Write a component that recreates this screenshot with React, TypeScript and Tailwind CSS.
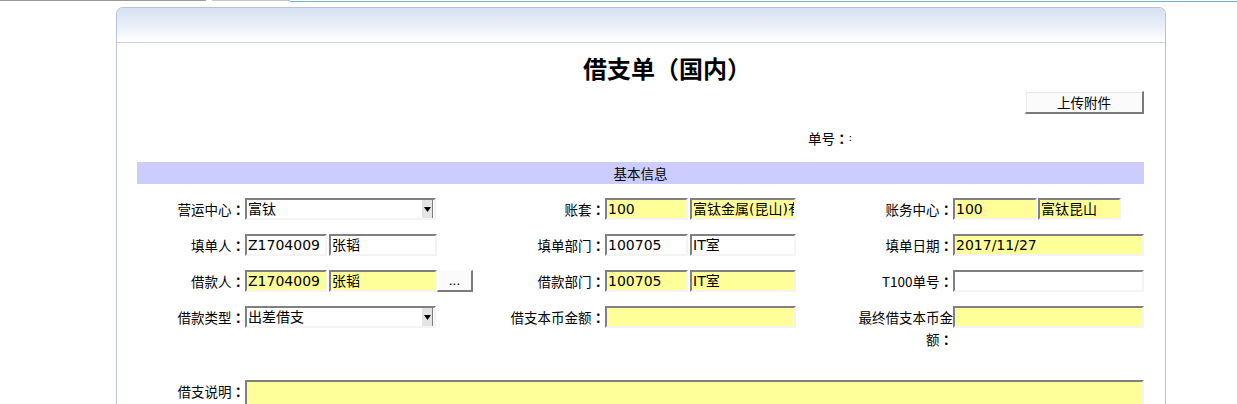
import React from "react";

const labelFont = { fontFamily: '"Noto Sans CJK SC", "DejaVu Sans", sans-serif' };

function Field({ w, value = "", yellow = false }: { w: string; value?: string; yellow?: boolean }) {
  return (
    <div
      className={`${w} h-[22px] shrink-0 border-t-2 border-l-2 border-b-2 border-r-2 border-t-[#808080] border-l-[#808080] border-b-[#f4f4f4] border-r-[#f4f4f4] ${
        yellow ? "bg-[#ffff99]" : "bg-white"
      } pl-[1px] text-[14px] leading-[18px] text-black whitespace-nowrap overflow-hidden font-['DejaVu_Sans','Noto_Sans_CJK_SC',sans-serif]`}
    >
      {value}
    </div>
  );
}

function Select({ value }: { value: string }) {
  return (
    <div className="w-[191px] h-[22px] shrink-0 flex border-t-2 border-l-2 border-b-2 border-r-2 border-t-[#808080] border-l-[#808080] border-b-[#f4f4f4] border-r-[#f4f4f4] bg-white">
      <div className="flex-1 pl-[1px] text-[14px] leading-[18px] text-black whitespace-nowrap overflow-hidden font-['DejaVu_Sans','Noto_Sans_CJK_SC',sans-serif]">
        {value}
      </div>
      <div className="w-[11px] h-[18px] bg-[#e4e4e4] border-r border-[#808080] flex items-center justify-center mr-[1px]">
        <svg width="7" height="5" viewBox="0 0 7 5">
          <polygon points="0,0 7,0 3.5,5" fill="#000" />
        </svg>
      </div>
    </div>
  );
}

function Colon() {
  return (
    <span
      className="inline-block w-[13.5px] text-center font-bold"
      style={{ fontFamily: '"Noto Sans CJK TC", "Noto Sans CJK JP", sans-serif' }}
    >
      ：
    </span>
  );
}

function Label({ text }: { text: string }) {
  return (
    <div className="text-right text-[13.5px] leading-[22px] text-black" style={labelFont}>
      {text}
      <Colon />
    </div>
  );
}

export default function App() {
  return (
    <div className="w-[1237px] h-[404px] overflow-hidden bg-white">
      {/* top strip */}
      <div className="flex h-[1px]">
        <div className="w-[206px] bg-[#9a9a9a]" />
        <div className="w-[6px] bg-white" />
        <div className="w-[78px] bg-[#c4c4c4]" />
      </div>
      <div className="flex h-[1px]">
        <div className="w-[290px]" />
        <div className="flex-1 bg-[#7ab0cf]" />
      </div>

      {/* panel */}
      <div className="mt-[5px] ml-[116px] w-[1050px] h-[400px] border border-b-0 border-[#b8c2d4] rounded-t-[7px] overflow-hidden">
        <div className="h-[35px] bg-gradient-to-b from-[#d6e0f1] via-[#e9eff8] to-white border-b border-[#c6d4ec]" />
        <div className="pl-[20px] pr-[21px]" style={labelFont}>
          <div className="pl-[53px] text-center text-[24px] leading-[30px] h-[30px] font-bold text-black mt-[10px]">
            借支单（国内）
          </div>
          <div className="flex justify-end mt-[8px]">
            <div className="w-[119px] h-[23px] border-t border-l border-t-[#ffffff] border-l-[#ffffff] border-b-2 border-r-2 border-b-[#7a7a7a] border-r-[#7a7a7a] bg-[#fbfbfb] shadow-[inset_1px_1px_0_#e8e8e8] flex items-center justify-center text-[13.5px] text-black">
              上传附件
            </div>
          </div>
          <div className="mt-[15px] ml-[671px] h-[18px] flex items-center text-[13.5px] text-black">
            单号
            <Colon />
            <span className="font-['DejaVu_Sans'] text-[11px]">:</span>
          </div>
          <div className="mt-[15px] h-[22px] bg-[#ccccff] flex items-center justify-center text-[13.5px] text-black">
            基本信息
          </div>

          <div className="mt-[14px] grid grid-cols-[108px_255px_105px_247px_101px_191px] gap-y-[14px] items-start">
            <Label text="营运中心" />
            <div className="flex">
              <Select value="富钛" />
            </div>
            <Label text="账套" />
            <div className="flex gap-[2px]">
              <Field w="w-[83px]" value="100" yellow />
              <Field w="w-[106px]" value="富钛金属(昆山)有限公司" yellow />
            </div>
            <Label text="账务中心" />
            <div className="flex gap-[1px]">
              <Field w="w-[84px]" value="100" yellow />
              <Field w="w-[83px]" value="富钛昆山" yellow />
            </div>

            <Label text="填单人" />
            <div className="flex gap-[2px]">
              <Field w="w-[82px]" value="Z1704009" />
              <Field w="w-[108px]" value="张韬" />
            </div>
            <Label text="填单部门" />
            <div className="flex gap-[2px]">
              <Field w="w-[83px]" value="100705" />
              <Field w="w-[106px]" value="IT室" />
            </div>
            <Label text="填单日期" />
            <div className="flex">
              <Field w="w-[191px]" value="2017/11/27" yellow />
            </div>

            <Label text="借款人" />
            <div className="flex">
              <Field w="w-[82px]" value="Z1704009" yellow />
              <div className="w-[2px]" />
              <Field w="w-[108px]" value="张韬" yellow />
              <div className="w-[36px] h-[22px] border-t border-l border-t-white border-l-white border-b-2 border-r-2 border-b-[#7a7a7a] border-r-[#7a7a7a] bg-[#fbfbfb] flex items-center justify-center text-[12px] text-black font-['DejaVu_Sans']">
                ...
              </div>
            </div>
            <Label text="借款部门" />
            <div className="flex gap-[2px]">
              <Field w="w-[83px]" value="100705" yellow />
              <Field w="w-[106px]" value="IT室" yellow />
            </div>
            <Label text="T100单号" />
            <div className="flex">
              <Field w="w-[191px]" />
            </div>

            <Label text="借款类型" />
            <div className="flex">
              <Select value="出差借支" />
            </div>
            <Label text="借支本币金额" />
            <div className="flex">
              <Field w="w-[191px]" yellow />
            </div>
            <Label text="最终借支本币金额" />
            <div className="flex">
              <Field w="w-[191px]" yellow />
            </div>
          </div>

          <div className="mt-[30px] flex items-start">
            <div className="w-[108px] shrink-0">
              <Label text="借支说明" />
            </div>
            <div className="flex-1 h-[40px] border-t-2 border-l-2 border-r-2 border-t-[#808080] border-l-[#808080] border-r-[#f4f4f4] bg-[#ffff99]" />
          </div>
        </div>
      </div>
    </div>
  );
}
